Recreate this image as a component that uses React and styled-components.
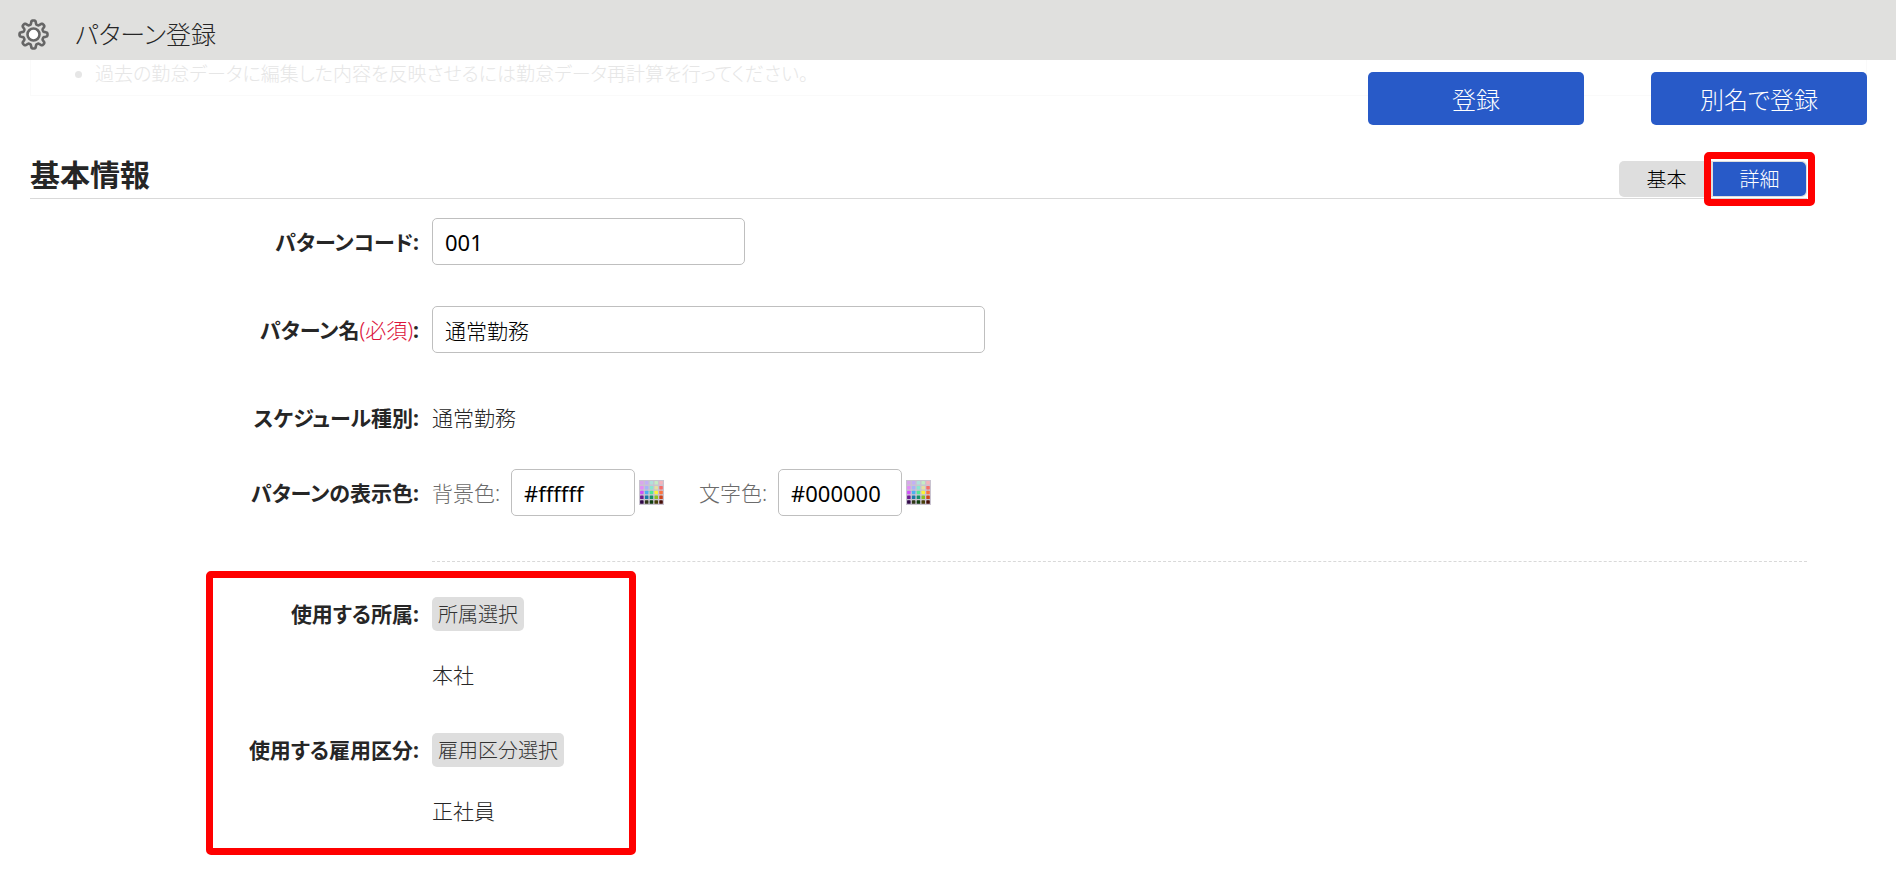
import React from "react";
import styled, { createGlobalStyle, css } from "styled-components";

const GlobalStyle = createGlobalStyle`
  *, *::before, *::after { box-sizing: border-box; }
  body {
    margin: 0;
    background: #fff;
    color: #262626;
    font-family: "Noto Sans", "Noto Sans CJK JP", sans-serif;
    font-size: 21px;
    font-weight: 300;
    line-height: 28px;
    font-feature-settings: "palt";
  }
  button, input { font: inherit; font-feature-settings: inherit; }
`;

const Header = styled.header`
  position: relative;
  z-index: 1;
  display: flex;
  align-items: center;
  gap: 26px;
  height: 60px;
  padding: 8px 18px 0;
  background: #e0e0de;
`;

const PageTitle = styled.h1`
  margin: 0;
  font-size: 25px;
  font-weight: 300;
  line-height: 36px;
`;

const Actions = styled.div`
  position: absolute;
  top: 72px;
  right: 29px;
  display: flex;
  gap: 67px;
`;

const PrimaryButton = styled.button`
  width: 216px;
  height: 53px;
  padding: 2px 0 0;
  border: 0;
  border-radius: 5px;
  background: #285ac8;
  color: #fff;
  font-size: 24px;
`;

const Notice = styled.ul`
  height: 36px;
  margin: 0 29px 0 30px;
  padding: 0 0 0 64px;
  border: 1px solid #fafafa;
  border-top: 0;
  color: #e6e6e6;
  font-size: 19px;
`;

const Main = styled.main`
  margin: 56px 89px 0 30px;
`;

const SectionHead = styled.div`
  display: flex;
  align-items: flex-end;
  justify-content: space-between;
  height: 47px;
  padding-bottom: 1px;
  border-bottom: 1px solid #d9d9d9;
`;

const SectionTitle = styled.h2`
  margin: 0;
  font-size: 30px;
  font-weight: 700;
  line-height: 44px;
`;

const Tabs = styled.div`
  display: flex;
  width: 188px;
  height: 36px;
  padding: 1px;
  border-radius: 5px;
  background: #dedede;
`;

const highlight = css`
  &::after {
    content: "";
    position: absolute;
    border: 7px solid #f00;
    border-radius: 5px;
    pointer-events: none;
  }
`;

const Tab = styled.button`
  position: relative;
  flex: 1;
  padding: 1px 0 0;
  border: 0;
  border-radius: 0 5px 5px 0;
  background: ${(p) => (p.$active ? "#285ac8" : "transparent")};
  color: ${(p) => (p.$active ? "#fff" : "#000")};
  font-size: 20px;
  ${(p) => p.$active && highlight}
  &::after { inset: -10px -9px; }
`;

const Form = styled.form`
  display: flex;
  flex-direction: column;
  padding-top: 19px;
`;

const Row = styled.div`
  display: grid;
  grid-template-columns: 389px 1fr;
  column-gap: 13px;
  align-items: center;
  min-height: ${(p) => p.$height || 47}px;
  margin-bottom: ${(p) => p.$gap || 0}px;
`;

const labelStyle = css`
  text-align: right;
  font-weight: 700;
`;
const Label = styled.label`${labelStyle}`;
const Caption = styled.span`${labelStyle}`;

const Required = styled.span`
  color: #dc143c;
  font-weight: 300;
`;

const TextBox = styled.input`
  width: ${(p) => p.$width}px;
  height: 47px;
  padding: 0 12px;
  border: 1px solid #bfbfbf;
  border-radius: 5px;
  background: #fff;
  color: #000;
  ${(p) => p.$code && "font-size: 22px; font-weight: 400;"}
`;

const Colors = styled.div`
  display: flex;
  align-items: center;
  gap: 35px;
`;

const ColorField = styled.div`
  display: flex;
  align-items: center;
  gap: 4px;
`;

const ColorLabel = styled.label`
  width: 75px;
  color: #6b6b6b;
`;

const PaletteButton = styled.button`
  display: block;
  padding: 0;
  border: 0;
  background: none;
  line-height: 0;
`;

const Divider = styled.hr`
  align-self: stretch;
  margin: 0 0 35px 402px;
  border: 0;
  border-top: 1px dashed #d9d9d9;
`;

const Scope = styled.div`
  position: relative;
  ${highlight}
  &::after { left: 176px; width: 430px; top: -26px; bottom: 2px; }
`;

const SelectButton = styled.button`
  height: 34px;
  padding: 1px 6px 0;
  border: 0;
  border-radius: 5px;
  background: #dedede;
  color: #333;
  font-size: 20px;
`;

const Value = styled.div`
  margin-left: 402px;
  padding: 30px 0 ${(p) => (p.$last ? 32 : 44)}px;
`;

const swatches = [
  ["#d9a6ec", "#c4b0f4", "#b0e0dc", "#c4ecc4", "#f4b4bc"],
  ["#e48cf8", "#a8b4f8", "#88e8d0", "#e4e0a0", "#f86c68"],
  ["#d050f8", "#4cb0f0", "#50e894", "#fcf434", "#fc7440"],
  ["#6c1890", "#1878a8", "#149068", "#8cc020", "#d04418"],
  ["#300848", "#303818", "#104010", "#484008", "#481008"],
];

function Palette() {
  return (
    <svg width="25" height="25" viewBox="0 0 25 25" aria-hidden="true">
      <rect width="25" height="25" fill="#c9c3d0" />
      {swatches.map((line, y) =>
        line.map((fill, x) => (
          <rect key={`${x}-${y}`} x={1.1 + x * 4.8} y={1.1 + y * 4.8} width="3.5" height="3.5" rx="0.6" fill={fill} />
        ))
      )}
    </svg>
  );
}

function gearPath() {
  const points = [];
  for (let i = 0; i <= 160; i++) {
    const a = (i / 160) * Math.PI * 2;
    const wave = Math.tanh(2.2 * Math.cos(8 * a)) / Math.tanh(2.2);
    const r = 12.1 + 1.9 * wave;
    points.push(`${(15.5 + r * Math.sin(a)).toFixed(2)} ${(15.5 - r * Math.cos(a)).toFixed(2)}`);
  }
  return `M${points.join("L")}Z`;
}

function Gear() {
  return (
    <svg width="31" height="31" viewBox="0 0 31 31" aria-hidden="true">
      <path d={gearPath()} fill="none" stroke="#666" strokeWidth="2.6" strokeLinejoin="round" />
      <circle cx="15.5" cy="15.5" r="6" fill="#fff" stroke="#666" strokeWidth="2.6" />
    </svg>
  );
}

function ColorInput({ id, label, value }) {
  return (
    <ColorField>
      <ColorLabel htmlFor={id}>{label}:</ColorLabel>
      <TextBox id={id} $code $width={124} defaultValue={value} />
      <PaletteButton type="button" aria-label={label}>
        <Palette />
      </PaletteButton>
    </ColorField>
  );
}

export default function App() {
  return (
    <>
      <GlobalStyle />
      <Header>
        <Gear />
        <PageTitle>パターン登録</PageTitle>
        <Actions>
          <PrimaryButton type="submit" form="pattern">登録</PrimaryButton>
          <PrimaryButton type="button">別名で登録</PrimaryButton>
        </Actions>
      </Header>
      <Notice>
        <li>過去の勤怠データに編集した内容を反映させるには勤怠データ再計算を行ってください。</li>
      </Notice>
      <Main>
        <SectionHead>
          <SectionTitle>基本情報</SectionTitle>
          <Tabs>
            <Tab type="button">基本</Tab>
            <Tab type="button" $active>詳細</Tab>
          </Tabs>
        </SectionHead>
        <Form id="pattern" onSubmit={(e) => e.preventDefault()}>
          <Row $gap={41}>
            <Label htmlFor="code">パターンコード:</Label>
            <TextBox id="code" $code $width={313} defaultValue="001" />
          </Row>
          <Row $gap={41}>
            <Label htmlFor="name">
              パターン名<Required>(必須)</Required>:
            </Label>
            <TextBox id="name" $width={553} defaultValue="通常勤務" />
          </Row>
          <Row $gap={28}>
            <Caption>スケジュール種別:</Caption>
            <span>通常勤務</span>
          </Row>
          <Row $gap={45}>
            <Caption>パターンの表示色:</Caption>
            <Colors>
              <ColorInput id="background" label="背景色" value="#ffffff" />
              <ColorInput id="foreground" label="文字色" value="#000000" />
            </Colors>
          </Row>
          <Divider />
          <Scope>
            <Row $height={34}>
              <Caption>使用する所属:</Caption>
              <div><SelectButton type="button">所属選択</SelectButton></div>
            </Row>
            <Value>本社</Value>
            <Row $height={34}>
              <Caption>使用する雇用区分:</Caption>
              <div><SelectButton type="button">雇用区分選択</SelectButton></div>
            </Row>
            <Value $last>正社員</Value>
          </Scope>
        </Form>
      </Main>
    </>
  );
}
